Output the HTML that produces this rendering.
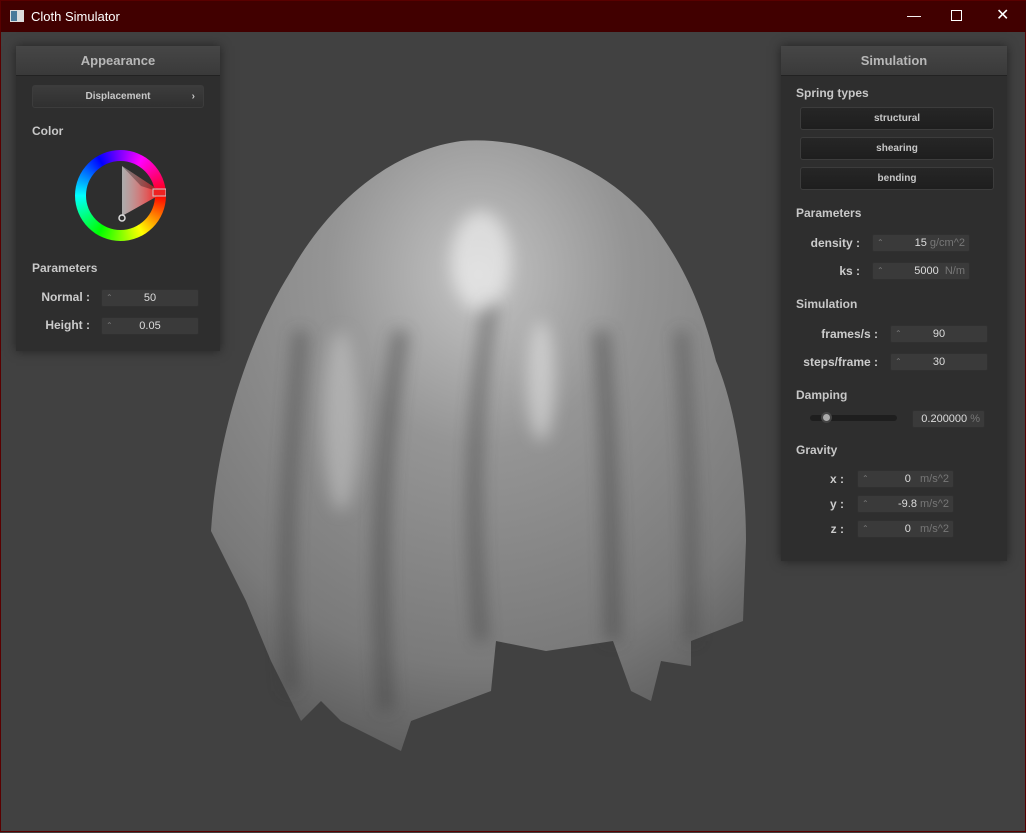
<!DOCTYPE html>
<html><head><style>
*{margin:0;padding:0;box-sizing:border-box}
body{width:1026px;height:832px;background:#414141;font-family:"Liberation Sans",sans-serif;position:relative;overflow:hidden;border:1px solid #5a0000}
.tb{position:absolute;left:0;top:0;width:1026px;height:31px;background:#410000;color:#fff;font-size:13px}
.tb .t{position:absolute;left:30px;top:8px}
.panel{position:absolute;background:#2e2e2e;box-shadow:0 0 10px rgba(0,0,0,.5)}
.hd{height:30px;background:linear-gradient(#464646,#3a3a3a);border-bottom:1px solid #222;color:#b8b8b8;font-weight:bold;font-size:13px;text-align:center;line-height:30px}
.lbl{position:absolute;color:#c8c8c8;font-weight:bold;font-size:12px}
.btn{position:absolute;background:linear-gradient(#262626,#1e1e1e);border:1px solid #3c3c3c;border-radius:3px;color:#c8c8c8;font-size:10px;font-weight:bold;text-align:center;line-height:21px}
.box{position:absolute;background:#3a3a3a;border:1px solid #303030;border-radius:2px;color:#ddd;font-size:11px;height:18px;line-height:16px}
.box .a{position:absolute;left:4px;top:0;color:#777;font-size:8px}
.u{color:#777}
.rl{position:absolute;color:#ccc;font-weight:bold;font-size:12px;text-align:right}
</style></head><body>
<div class="tb"><svg style="position:absolute;left:9px;top:9px" width="14" height="12"><rect x="0" y="0" width="14" height="12" fill="#ddd"/><rect x="1" y="1" width="6" height="10" fill="#4a7a9a"/></svg><span class="t">Cloth Simulator</span>
<span style="position:absolute;left:906px;top:6px;font-size:14px">&#8212;</span>
<span style="position:absolute;left:950px;top:9px;width:11px;height:11px;border:1px solid #fff"></span>
<span style="position:absolute;left:995px;top:4px;font-size:16px">&#10005;</span></div>

<svg style="position:absolute;left:0;top:0" width="1026" height="832">
<defs><radialGradient id="g" cx="0.5" cy="0.22" r="0.8"><stop offset="0" stop-color="#c4c4c4"/><stop offset="0.35" stop-color="#959595"/><stop offset="0.8" stop-color="#7a7a7a"/><stop offset="1" stop-color="#5e5e5e"/></radialGradient>
<filter id="b"><feGaussianBlur stdDeviation="8"/></filter></defs>
<path d="M460 140 C520 135 600 160 650 220 C680 260 700 300 715 360 C740 420 745 500 745 540 L742 620 L690 640 L690 665 L660 660 L650 700 L630 690 L612 640 L545 650 L495 640 L490 690 L410 720 L400 750 L340 720 L320 700 L300 720 L270 660 L245 600 L210 530 C215 450 240 350 290 270 C330 200 390 150 460 140 Z" fill="url(#g)"/>
<g filter="url(#b)" fill="none" opacity=".45">
<path d="M300 330 C290 450 280 560 290 690" stroke="#3a3a3a" stroke-width="14"/>
<path d="M400 330 C380 450 375 560 385 710" stroke="#3a3a3a" stroke-width="16"/>
<path d="M490 300 C470 420 470 520 480 640" stroke="#3a3a3a" stroke-width="14"/>
<path d="M600 330 C610 450 610 550 612 640" stroke="#3a3a3a" stroke-width="16"/>
<path d="M680 330 C690 450 690 550 690 640" stroke="#3a3a3a" stroke-width="12"/>
</g>
<g filter="url(#b)" opacity=".5">
<ellipse cx="480" cy="260" rx="30" ry="50" fill="#fff"/>
<ellipse cx="540" cy="380" rx="14" ry="60" fill="#eee"/>
<ellipse cx="340" cy="420" rx="18" ry="90" fill="#ccc"/>
</g>
</svg>

<div class="panel" style="left:15px;top:45px;width:204px;height:305px">
<div class="hd">Appearance</div>
<div class="btn" style="left:16px;top:39px;width:172px;height:23px;background:linear-gradient(#3c3c3c,#303030);line-height:21px">Displacement<span style="position:absolute;right:8px">›</span></div>
<div class="lbl" style="left:16px;top:78px">Color</div>
<div style="position:absolute;left:59px;top:104px;width:91px;height:91px;border-radius:50%;background:conic-gradient(from 90deg,#f00,#ff0 ,#0f0,#0ff,#00f,#f0f,#f00)"></div>
<div style="position:absolute;left:70px;top:115px;width:69px;height:69px;border-radius:50%;background:#2e2e2e"></div>
<svg style="position:absolute;left:85px;top:120px" width="65" height="60"><defs><linearGradient id="tr" x1="0" y1="0" x2="1" y2="0"><stop offset="0" stop-color="#fff" stop-opacity=".6"/><stop offset="1" stop-color="#f00"/></linearGradient></defs><polygon points="21,50 21,0 62,27" fill="url(#tr)"/><polygon points="21,0 62,27 40,20" fill="#000" opacity=".3"/><circle cx="21" cy="52" r="3" fill="none" stroke="#ddd" stroke-width="1.5"/><rect x="52" y="23" width="13" height="7" fill="#e22" stroke="#ccc"/></svg>
<div class="lbl" style="left:16px;top:215px">Parameters</div>
<div class="rl" style="left:10px;top:244px;width:64px">Normal :</div>
<div class="box" style="left:85px;top:243px;width:98px;text-align:center"><span class="a">⌃</span>50</div>
<div class="rl" style="left:10px;top:272px;width:64px">Height :</div>
<div class="box" style="left:85px;top:271px;width:98px;text-align:center"><span class="a">⌃</span>0.05</div>
</div>

<div class="panel" style="left:780px;top:45px;width:226px;height:515px">
<div class="hd">Simulation</div>
<div class="lbl" style="left:15px;top:40px">Spring types</div>
<div class="btn" style="left:19px;top:61px;width:194px;height:23px">structural</div>
<div class="btn" style="left:19px;top:91px;width:194px;height:23px">shearing</div>
<div class="btn" style="left:19px;top:121px;width:194px;height:23px">bending</div>
<div class="lbl" style="left:15px;top:160px">Parameters</div>
<div class="rl" style="left:0;top:190px;width:79px">density :</div>
<div class="box" style="left:91px;top:188px;width:98px;text-align:right;padding-right:4px"><span class="a">⌃</span>15 <span class="u">g/cm^2</span></div>
<div class="rl" style="left:0;top:218px;width:79px">ks :</div>
<div class="box" style="left:91px;top:216px;width:98px;text-align:right;padding-right:4px"><span class="a">⌃</span>5000 &nbsp;<span class="u">N/m</span></div>
<div class="lbl" style="left:15px;top:251px">Simulation</div>
<div class="rl" style="left:0;top:281px;width:97px">frames/s :</div>
<div class="box" style="left:109px;top:279px;width:98px;text-align:center"><span class="a">⌃</span>90</div>
<div class="rl" style="left:0;top:309px;width:97px">steps/frame :</div>
<div class="box" style="left:109px;top:307px;width:98px;text-align:center"><span class="a">⌃</span>30</div>
<div class="lbl" style="left:15px;top:342px">Damping</div>
<div style="position:absolute;left:29px;top:369px;width:87px;height:6px;background:#1e1e1e;border-radius:3px"></div>
<div style="position:absolute;left:40px;top:366px;width:11px;height:11px;border-radius:50%;background:#aaa;border:2px solid #444"></div>
<div class="box" style="left:131px;top:364px;width:73px;text-align:right;padding-right:4px">0.200000 <span class="u">%</span></div>
<div class="lbl" style="left:15px;top:397px">Gravity</div>
<div class="rl" style="left:0;top:426px;width:63px">x :</div>
<div class="box" style="left:76px;top:424px;width:97px;text-align:right;padding-right:4px"><span class="a">⌃</span>0 &nbsp;&nbsp;<span class="u">m/s^2</span></div>
<div class="rl" style="left:0;top:451px;width:63px">y :</div>
<div class="box" style="left:76px;top:449px;width:97px;text-align:right;padding-right:4px"><span class="a">⌃</span>-9.8 <span class="u">m/s^2</span></div>
<div class="rl" style="left:0;top:476px;width:63px">z :</div>
<div class="box" style="left:76px;top:474px;width:97px;text-align:right;padding-right:4px"><span class="a">⌃</span>0 &nbsp;&nbsp;<span class="u">m/s^2</span></div>
</div>
</body></html>
